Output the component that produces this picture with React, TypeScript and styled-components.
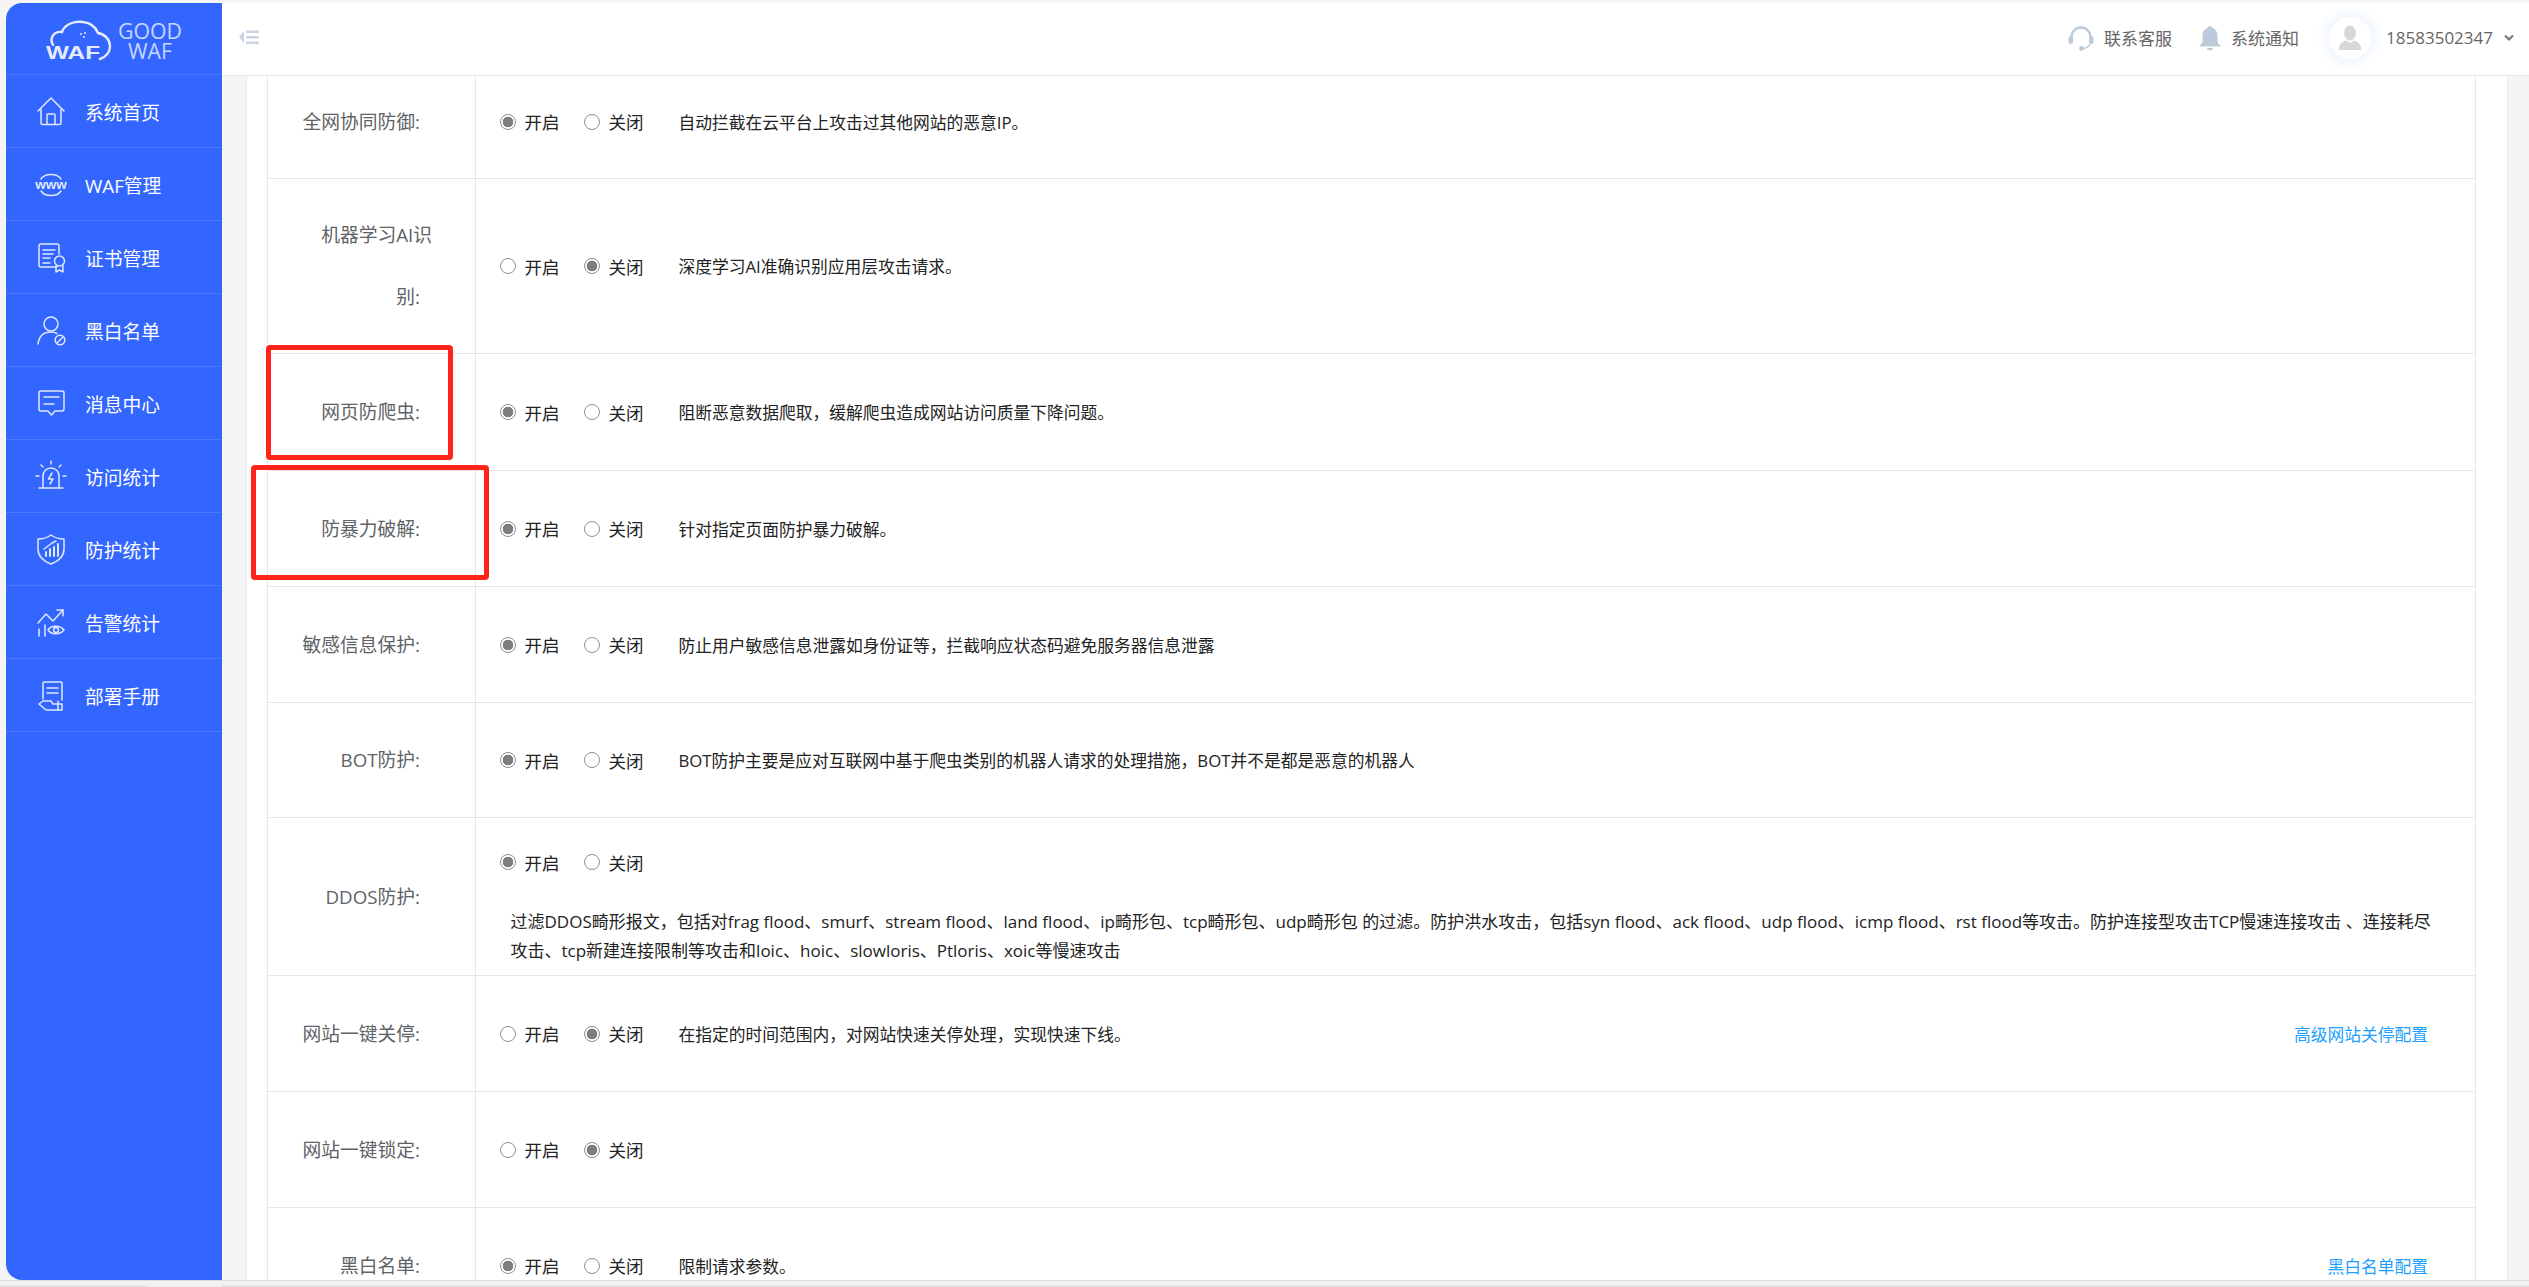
import React from 'react';
import styled, { createGlobalStyle } from 'styled-components';

const GlobalStyle = createGlobalStyle`
  html, body {
    margin: 0;
    padding: 0;
    height: 100%;
    overflow: hidden;
    background: #f5f5f5;
  }
  * {
    box-sizing: border-box;
  }
`;

const Page = styled.div`
  height: 1287px;
  display: flex;
  flex-direction: column;
  padding-top: 3px;
  background: #f5f5f5;
  font-family: 'Open Sans', 'Noto Sans CJK SC', sans-serif;
`;

const Shell = styled.div`
  flex: 1;
  min-height: 0;
  display: flex;
  padding-left: 6px;
  border-bottom: 1px solid #dcdcdc;
`;

const Sidebar = styled.aside`
  width: 216px;
  flex-shrink: 0;
  background: #3366ff;
  border-radius: 16px 0 0 16px;
  color: #fff;
`;

const LogoBox = styled.div`
  height: 72px;
  padding-left: 40px;
  display: flex;
  align-items: center;
  border-bottom: 1px solid rgba(255, 255, 255, 0.1);
`;

const NavItem = styled.a`
  height: 73px;
  display: flex;
  align-items: center;
  padding-left: 27px;
  gap: 16px;
  font-size: 18.75px;
  color: #fff;
  border-bottom: 1px solid rgba(255, 255, 255, 0.12);
`;

const NavIcon = styled.svg`
  width: 36px;
  height: 36px;
  flex-shrink: 0;
  fill: none;
  stroke: #dfe8ff;
  stroke-width: 1.5;
  stroke-linecap: round;
  stroke-linejoin: round;
`;

const Main = styled.div`
  flex: 1;
  min-width: 0;
  display: flex;
  flex-direction: column;
`;

const Header = styled.header`
  height: 73px;
  flex-shrink: 0;
  position: relative;
  z-index: 2;
  display: flex;
  align-items: center;
  justify-content: space-between;
  padding: 0 15px 3px 17px;
  background: #fff;
  border-bottom: 1px solid #e8e8e8;
`;

const HeaderRight = styled.div`
  display: flex;
  align-items: center;
  font-size: 17px;
  color: #666;
`;

const HeaderLink = styled.span<{ $gap: number }>`
  display: flex;
  align-items: center;
  gap: 10px;
  margin-right: ${(p) => p.$gap}px;
`;

const Avatar = styled.span`
  width: 42px;
  height: 42px;
  border-radius: 50%;
  margin-right: 15px;
  display: flex;
  align-items: center;
  justify-content: center;
  background: #fff;
  box-shadow: 0 0 12px 6px #f1f7fe;
`;

const Phone = styled.span`
  font-size: 17px;
`;

const Caret = styled.svg`
  width: 10px;
  height: 8px;
  margin-left: 11px;
`;

const Content = styled.div`
  flex: 1;
  min-height: 0;
  overflow: hidden;
  padding: 0 21px 0 24px;
`;

const Panel = styled.div`
  position: relative;
  height: 100%;
  overflow: hidden;
  background: #fff;
  padding: 0 31px 0 20px;
  border-left: 1px solid #ececec;
  border-right: 1px solid #ececec;
`;

const Table = styled.div`
  margin-top: -11px;
  border-left: 1px solid #e6e6e6;
  border-right: 1px solid #e6e6e6;
`;

const Row = styled.div<{ $height: number }>`
  display: grid;
  grid-template-columns: 208px 1fr;
  min-height: ${(p) => p.$height}px;
  border-bottom: 1px solid #e6e6e6;
`;

const Label = styled.div`
  display: flex;
  align-items: center;
  justify-content: flex-end;
  padding: 0 43px 0 20px;
  border-right: 1px solid #e6e6e6;
  font-size: 18.75px;
  line-height: 62px;
  text-align: right;
  color: #606266;
`;

const Colon = styled.span`
  margin-right: 12px;
`;

const Cell = styled.div`
  min-width: 0;
  padding: 0 47px 0 23.5px;
  display: flex;
  align-items: center;
  justify-content: space-between;
`;

const CellStack = styled.div`
  min-width: 0;
  padding: 13px 28px 0 23.5px;
`;

const Left = styled.div`
  display: flex;
  align-items: center;
`;

const RadioGroup = styled.div`
  display: flex;
  align-items: center;
  height: 62px;
  font-size: 17.5px;
  color: #222;
`;

const RadioLabel = styled.label`
  display: flex;
  align-items: center;
  gap: 9px;
  width: 84px;
`;

const RadioInput = styled.input`
  appearance: none;
  width: 16px;
  height: 16px;
  margin: 0;
  border-radius: 50%;
  border: 1px solid #8f8f8f;
  background: #fff;

  &:checked {
    background: radial-gradient(circle, #7d7d7d 0, #7d7d7d 5px, #fff 5.6px);
  }
`;

const Desc = styled.span`
  margin-left: 11px;
  font-size: 16.75px;
  color: #222;
`;

const LongDesc = styled.p`
  margin: 15px 0 0;
  padding-left: 11px;
  font-size: 17px;
  line-height: 28.5px;
  color: #222;
`;

const ConfigLink = styled.a`
  font-size: 16.75px;
  color: #1e9fff;
`;

const Callout = styled.div<{ $left: number; $top: number; $w: number; $h: number }>`
  position: absolute;
  left: ${(p) => p.$left}px;
  top: ${(p) => p.$top}px;
  width: ${(p) => p.$w}px;
  height: ${(p) => p.$h}px;
  border: 5px solid #ff2417;
  border-radius: 4px;
`;

const BottomBar = styled.div`
  height: 6px;
  flex-shrink: 0;
  display: flex;
  align-items: flex-end;
  background: #f1f1f1;
`;

const ScrollPiece = styled.span<{ $width?: number }>`
  height: 2px;
  flex: ${(p) => (p.$width ? `0 0 ${p.$width}px` : 1)};
  background: #e4e4e4;
`;

const ScrollGap = styled.span`
  flex: 0 0 74px;
`;

const Logo = () => (
  <svg width="140" height="50" viewBox="0 0 140 50">
    <path
      d="M7 31 C3 24 8 17 16 18 C19 9 30 7 37 8 C46 9 50 14 52 19 C59 20 64 26 64 32 C64 38 60 43 54 45"
      fill="none"
      stroke="#e6ecff"
      strokeWidth="2.4"
      strokeLinecap="round"
    />
    <circle cx="35" cy="20" r="1" fill="#e6ecff" />
    <circle cx="39" cy="19" r="1" fill="#e6ecff" />
    <circle cx="38" cy="23" r="1" fill="#e6ecff" />
    <text x="0" y="45" fontFamily="'Liberation Sans', sans-serif" fontWeight="700" fontSize="19" fill="#e6ecff" textLength="54" lengthAdjust="spacingAndGlyphs">
      WAF
    </text>
    <text x="72" y="25" fontFamily="'Open Sans', sans-serif" fontSize="22" fill="#c9d7ff" textLength="64" lengthAdjust="spacingAndGlyphs">
      GOOD
    </text>
    <text x="82" y="45" fontFamily="'Open Sans', sans-serif" fontSize="22" fill="#c9d7ff" textLength="44" lengthAdjust="spacingAndGlyphs">
      WAF
    </text>
  </svg>
);

const icons: Record<string, React.ReactNode> = {
  home: (
    <>
      <path d="M5 18 L18 5 L31 18" />
      <path d="M8 16 V30 a1.5 1.5 0 0 0 1.5 1.5 H26.5 a1.5 1.5 0 0 0 1.5 -1.5 V16" />
      <path d="M14 31 V22 a1 1 0 0 1 1 -1 H21 a1 1 0 0 1 1 1 V31" />
    </>
  ),
  www: (
    <>
      <path d="M8 13 C12 7 24 7 28 13" />
      <path d="M8 25 C12 31 24 31 28 25" />
      <text x="18" y="22.5" textAnchor="middle" fontFamily="'Liberation Sans', sans-serif" fontWeight="700" fontSize="13.5" fill="#dfe8ff" stroke="none">
        www
      </text>
    </>
  ),
  cert: (
    <>
      <path d="M24 28 H8 a2 2 0 0 1 -2 -2 V7 a2 2 0 0 1 2 -2 H24 a2 2 0 0 1 2 2 V15" />
      <path d="M10 11 H22 M10 15 H20 M10 19 H17 M10 24 H17" />
      <circle cx="26.5" cy="22" r="5" />
      <path d="M23 27 V33 L26.5 31 L30 33 V27" />
    </>
  ),
  user: (
    <>
      <circle cx="18" cy="12" r="7" />
      <path d="M5 32 C6 24 11 20 18 20 C20 20 22 20.5 24 21.5" />
      <circle cx="27" cy="28" r="4.8" />
      <path d="M24 31 L30 25" />
    </>
  ),
  message: (
    <>
      <path d="M8 6 H29 a2 2 0 0 1 2 2 V24 a2 2 0 0 1 -2 2 H22 L18.5 30 L15 26 H8 a2 2 0 0 1 -2 -2 V8 a2 2 0 0 1 2 -2 Z" />
      <path d="M11 12 H26 M11 19 H21" />
    </>
  ),
  alarm: (
    <>
      <path d="M10 29 V18 a8 8 0 0 1 16 0 V29" />
      <path d="M6 30 H30" />
      <path d="M19 15 L15.5 21 H20 L17 26" />
      <path d="M18 3 V6 M8 7 L10 9 M28 7 L26 9 M3 18 H6 M30 18 H33" />
    </>
  ),
  shield: (
    <>
      <path d="M18 4 C22 7 26 8 31 8 V18 C31 25 26 30 18 33 C10 30 5 25 5 18 V8 C10 8 14 7 18 4 Z" />
      <path d="M13 25 V21 M17 25 V18 M21 25 V16 M25 25 V13" strokeWidth="2" />
      <path d="M11 18 L19 12 L23 10" />
    </>
  ),
  trend: (
    <>
      <path d="M5 19 L13 10 L20 17 L30 6" />
      <path d="M24 6 H30 V12" />
      <path d="M6 25 V32 M12 21 V32" />
      <path d="M15 26 C18 21 27 21 31 26 C27 31 18 31 15 26 Z" />
      <circle cx="23" cy="26" r="2.4" />
    </>
  ),
  manual: (
    <>
      <path d="M10 22 V6 a1 1 0 0 1 1 -1 H28 a1 1 0 0 1 1 1 V23" />
      <path d="M14 11 H25 M14 16 H25" />
      <path d="M6 27 L10 24 H18 L20 27 H29 V33 H13 Z" />
      <path d="M25 24 V33" />
    </>
  ),
};

const navItems = [
  { icon: 'home', text: '系统首页' },
  { icon: 'www', text: 'WAF管理' },
  { icon: 'cert', text: '证书管理' },
  { icon: 'user', text: '黑白名单' },
  { icon: 'message', text: '消息中心' },
  { icon: 'alarm', text: '访问统计' },
  { icon: 'shield', text: '防护统计' },
  { icon: 'trend', text: '告警统计' },
  { icon: 'manual', text: '部署手册' },
];

interface IRule {
  label: string;
  on: boolean;
  desc?: string;
  link?: string;
  height: number;
}

const rules: IRule[] = [
  { label: '全网协同防御', on: true, desc: '自动拦截在云平台上攻击过其他网站的恶意IP。', height: 114 },
  { label: '机器学习AI识别', on: false, desc: '深度学习AI准确识别应用层攻击请求。', height: 175 },
  { label: '网页防爬虫', on: true, desc: '阻断恶意数据爬取\uFF0C缓解爬虫造成网站访问质量下降问题。', height: 117 },
  { label: '防暴力破解', on: true, desc: '针对指定页面防护暴力破解。', height: 116 },
  { label: '敏感信息保护', on: true, desc: '防止用户敏感信息泄露如身份证等\uFF0C拦截响应状态码避免服务器信息泄露', height: 116 },
  { label: 'BOT防护', on: true, desc: 'BOT防护主要是应对互联网中基于爬虫类别的机器人请求的处理措施\uFF0CBOT并不是都是恶意的机器人', height: 115 },
];

const lowerRules: IRule[] = [
  { label: '网站一键关停', on: false, desc: '在指定的时间范围内\uFF0C对网站快速关停处理\uFF0C实现快速下线。', link: '高级网站关停配置', height: 116 },
  { label: '网站一键锁定', on: false, height: 116 },
  { label: '黑白名单', on: true, desc: '限制请求参数。', link: '黑白名单配置', height: 116 },
];

const ddosText =
  '过滤DDOS畸形报文\uFF0C包括对frag flood、smurf、stream flood、land flood、ip畸形包、tcp畸形包、udp畸形包 的过滤。防护洪水攻击\uFF0C包括syn flood、ack flood、udp flood、icmp flood、rst flood等攻击。防护连接型攻击TCP慢速连接攻击 、连接耗尽攻击、tcp新建连接限制等攻击和loic、hoic、slowloris、Ptloris、xoic等慢速攻击';

const Radios = ({ name, on }: { name: string; on: boolean }) => (
  <RadioGroup>
    <RadioLabel>
      <RadioInput type="radio" name={name} defaultChecked={on} />
      开启
    </RadioLabel>
    <RadioLabel>
      <RadioInput type="radio" name={name} defaultChecked={!on} />
      关闭
    </RadioLabel>
  </RadioGroup>
);

const RuleLabel = ({ text }: { text: string }) => (
  <Label>
    <span>
      {text}
      <Colon>:</Colon>
    </span>
  </Label>
);

const RuleRow = ({ rule }: { rule: IRule }) => (
  <Row $height={rule.height}>
    <RuleLabel text={rule.label} />
    <Cell>
      <Left>
        <Radios name={rule.label} on={rule.on} />
        {rule.desc && <Desc>{rule.desc}</Desc>}
      </Left>
      {rule.link && <ConfigLink>{rule.link}</ConfigLink>}
    </Cell>
  </Row>
);

const App = () => (
  <Page>
    <GlobalStyle />
    <Shell>
      <Sidebar>
        <LogoBox>
          <Logo />
        </LogoBox>
        {navItems.map((item) => (
          <NavItem key={item.text}>
            <NavIcon viewBox="0 0 36 36">{icons[item.icon]}</NavIcon>
            {item.text}
          </NavItem>
        ))}
      </Sidebar>
      <Main>
        <Header>
          <svg width="20" height="15" viewBox="0 0 20 15" fill="#c9d5e3">
            <path d="M5 1 V13 L0 7 Z" />
            <path d="M7 0.5 H20 V3 H7 Z M7 6 H20 V8.5 H7 Z M7 11.5 H20 V14 H7 Z" />
          </svg>
          <HeaderRight>
            <HeaderLink $gap={27}>
              <svg width="26" height="26" viewBox="0 0 26 26" fill="none">
                <path d="M3.5 15 V12 a9.5 9.5 0 0 1 19 0 V15" stroke="#bccbdc" strokeWidth="2.4" />
                <rect x="0.5" y="11" width="4.5" height="8" rx="2.2" fill="#bccbdc" />
                <rect x="21" y="11" width="4.5" height="8" rx="2.2" fill="#bccbdc" />
                <path d="M22 19 C21 22 18 23 15 23.5" stroke="#bccbdc" strokeWidth="1.5" />
                <circle cx="13.5" cy="23.5" r="2.4" fill="#bccbdc" />
              </svg>
              联系客服
            </HeaderLink>
            <HeaderLink $gap={30}>
              <svg width="22" height="26" viewBox="0 0 22 26" fill="#bccbdc">
                <path d="M11 1 C12.5 1 13.5 2 13.5 3 C17 4 18.5 7.5 18.5 11 V16 C18.5 18 20 19.5 21.5 20.5 V21.5 H0.5 V20.5 C2 19.5 3.5 18 3.5 16 V11 C3.5 7.5 5 4 8.5 3 C8.5 2 9.5 1 11 1 Z" />
                <path d="M8 23 H14 C14 24.5 12.5 25.5 11 25.5 C9.5 25.5 8 24.5 8 23 Z" />
              </svg>
              系统通知
            </HeaderLink>
            <Avatar>
              <svg width="24" height="26" viewBox="0 0 24 26" fill="#d8d8d8">
                <ellipse cx="12" cy="8" rx="6" ry="7.5" />
                <path d="M8 15.5 L12 18 L16 15.5 C20 17 23 19 23.5 25 H0.5 C1 19 4 17 8 15.5 Z" />
              </svg>
            </Avatar>
            <Phone>18583502347</Phone>
            <Caret viewBox="0 0 10 8">
              <path d="M1 1.5 L5 5.5 L9 1.5" fill="none" stroke="#777" strokeWidth="2.2" />
            </Caret>
          </HeaderRight>
        </Header>
        <Content>
          <Panel>
            <Table>
              {rules.map((rule) => (
                <RuleRow key={rule.label} rule={rule} />
              ))}
              <Row $height={158}>
                <RuleLabel text="DDOS防护" />
                <CellStack>
                  <Radios name="ddos" on />
                  <LongDesc>{ddosText}</LongDesc>
                </CellStack>
              </Row>
              {lowerRules.map((rule) => (
                <RuleRow key={rule.label} rule={rule} />
              ))}
            </Table>
            <Callout $left={19} $top={269} $w={187} $h={115} />
            <Callout $left={4} $top={389} $w={238} $h={115} />
          </Panel>
        </Content>
      </Main>
    </Shell>
    <BottomBar>
      <ScrollPiece $width={148} />
      <ScrollGap />
      <ScrollPiece />
    </BottomBar>
  </Page>
);

export default App;
